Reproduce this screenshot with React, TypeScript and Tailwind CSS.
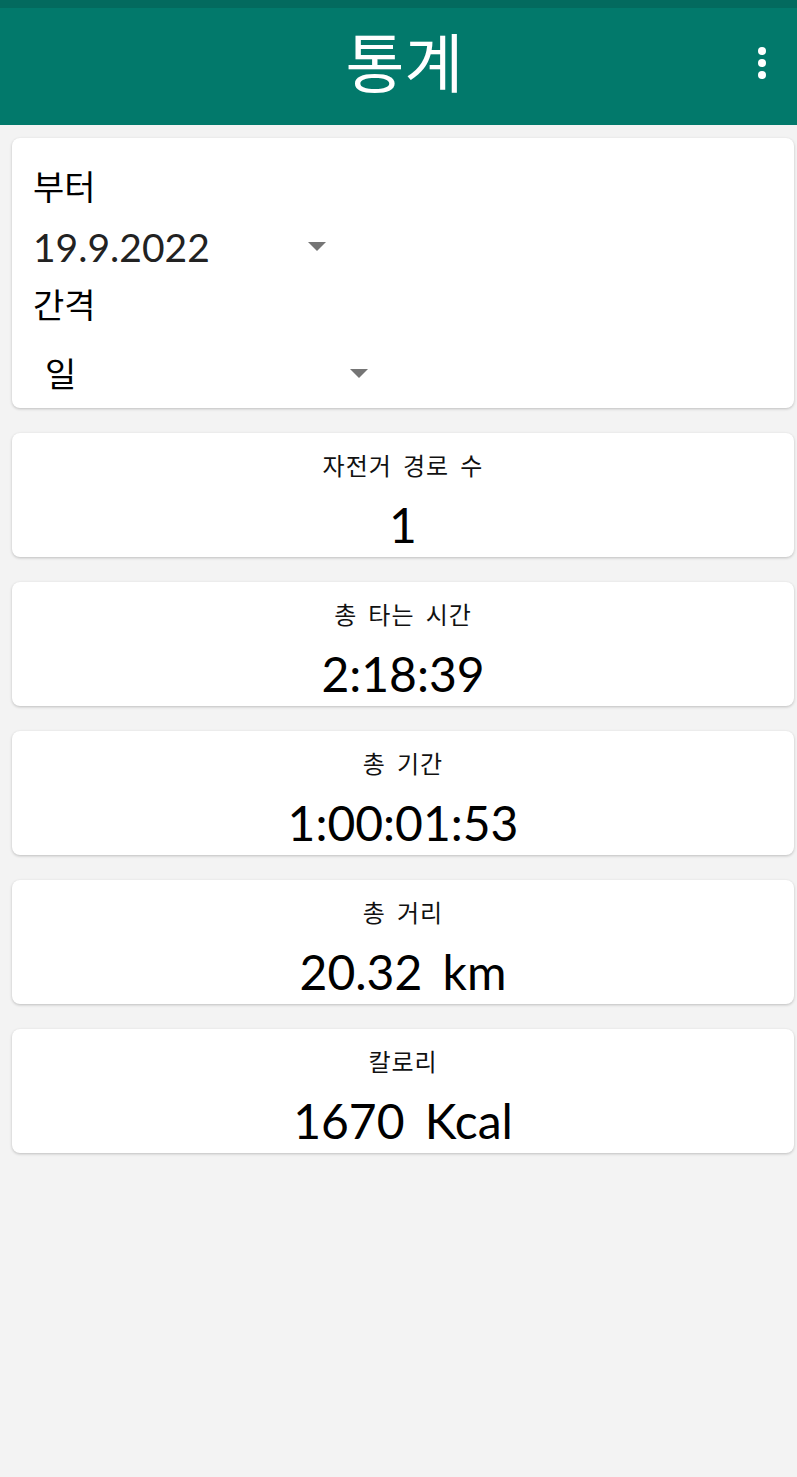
import React from "react";

const FONT = { fontFamily: '"Lato", "Noto Sans CJK KR", sans-serif' };

function Arrow() {
  return (
    <svg width="18" height="10" viewBox="0 0 18 10" className="block">
      <polygon points="0,0 18,0 9,9" fill="#757575" />
    </svg>
  );
}

function StatCard({ label, value }: { label: string; value: string }) {
  return (
    <div className="mt-[25px] flex h-[124px] flex-col items-center rounded-[8px] bg-white shadow-[0_1px_3px_rgba(0,0,0,0.22)]">
      <div className="mt-[14px] h-[38px] text-[24px] leading-[38px] tracking-[1px] text-[#111] [word-spacing:4px]">
        {label}
      </div>
      <div className="mt-[12px] h-[56px] text-[48px] leading-[56px] text-black [word-spacing:8px]">{value}</div>
    </div>
  );
}

export default function App() {
  return (
    <div className="min-h-[1477px] w-[797px] bg-[#f3f3f3]" style={FONT}>
      <div className="h-[8px] bg-[#036a5e]" />
      <div className="relative flex h-[117px] items-center justify-center bg-[#02796b]">
        <div className="-mt-[8px] ml-[12px] text-[64px] leading-[80px] text-white">통계</div>
        <div className="absolute right-[31px] top-[39px] flex flex-col items-center gap-[4px]">
          <span className="block h-[8px] w-[8px] rounded-full bg-white" />
          <span className="block h-[8px] w-[8px] rounded-full bg-white" />
          <span className="block h-[8px] w-[8px] rounded-full bg-white" />
        </div>
      </div>
      <div className="pl-[12px] pr-[3px] pt-[13px]">
        <div className="flex h-[270px] flex-col rounded-[8px] bg-white pl-[21px] shadow-[0_1px_3px_rgba(0,0,0,0.22)]">
          <div className="mt-[29px] h-[40px] text-[34px] leading-[40px] text-black">부터</div>
          <div className="mt-[20px] flex h-[40px] w-[293px] items-center justify-between">
            <span className="text-[39px] leading-[40px] text-[#222]">19.9.2022</span>
            <Arrow />
          </div>
          <div className="mt-[18px] h-[40px] text-[34px] leading-[40px] text-black">간격</div>
          <div className="mt-[27px] flex h-[44px] w-[335px] items-center justify-between pl-[12px]">
            <span className="text-[34px] leading-[44px] text-black">일</span>
            <Arrow />
          </div>
        </div>
        <StatCard label="자전거 경로 수" value="1" />
        <StatCard label="총 타는 시간" value="2:18:39" />
        <StatCard label="총 기간" value="1:00:01:53" />
        <StatCard label="총 거리" value="20.32 km" />
        <StatCard label="칼로리" value="1670 Kcal" />
      </div>
    </div>
  );
}
